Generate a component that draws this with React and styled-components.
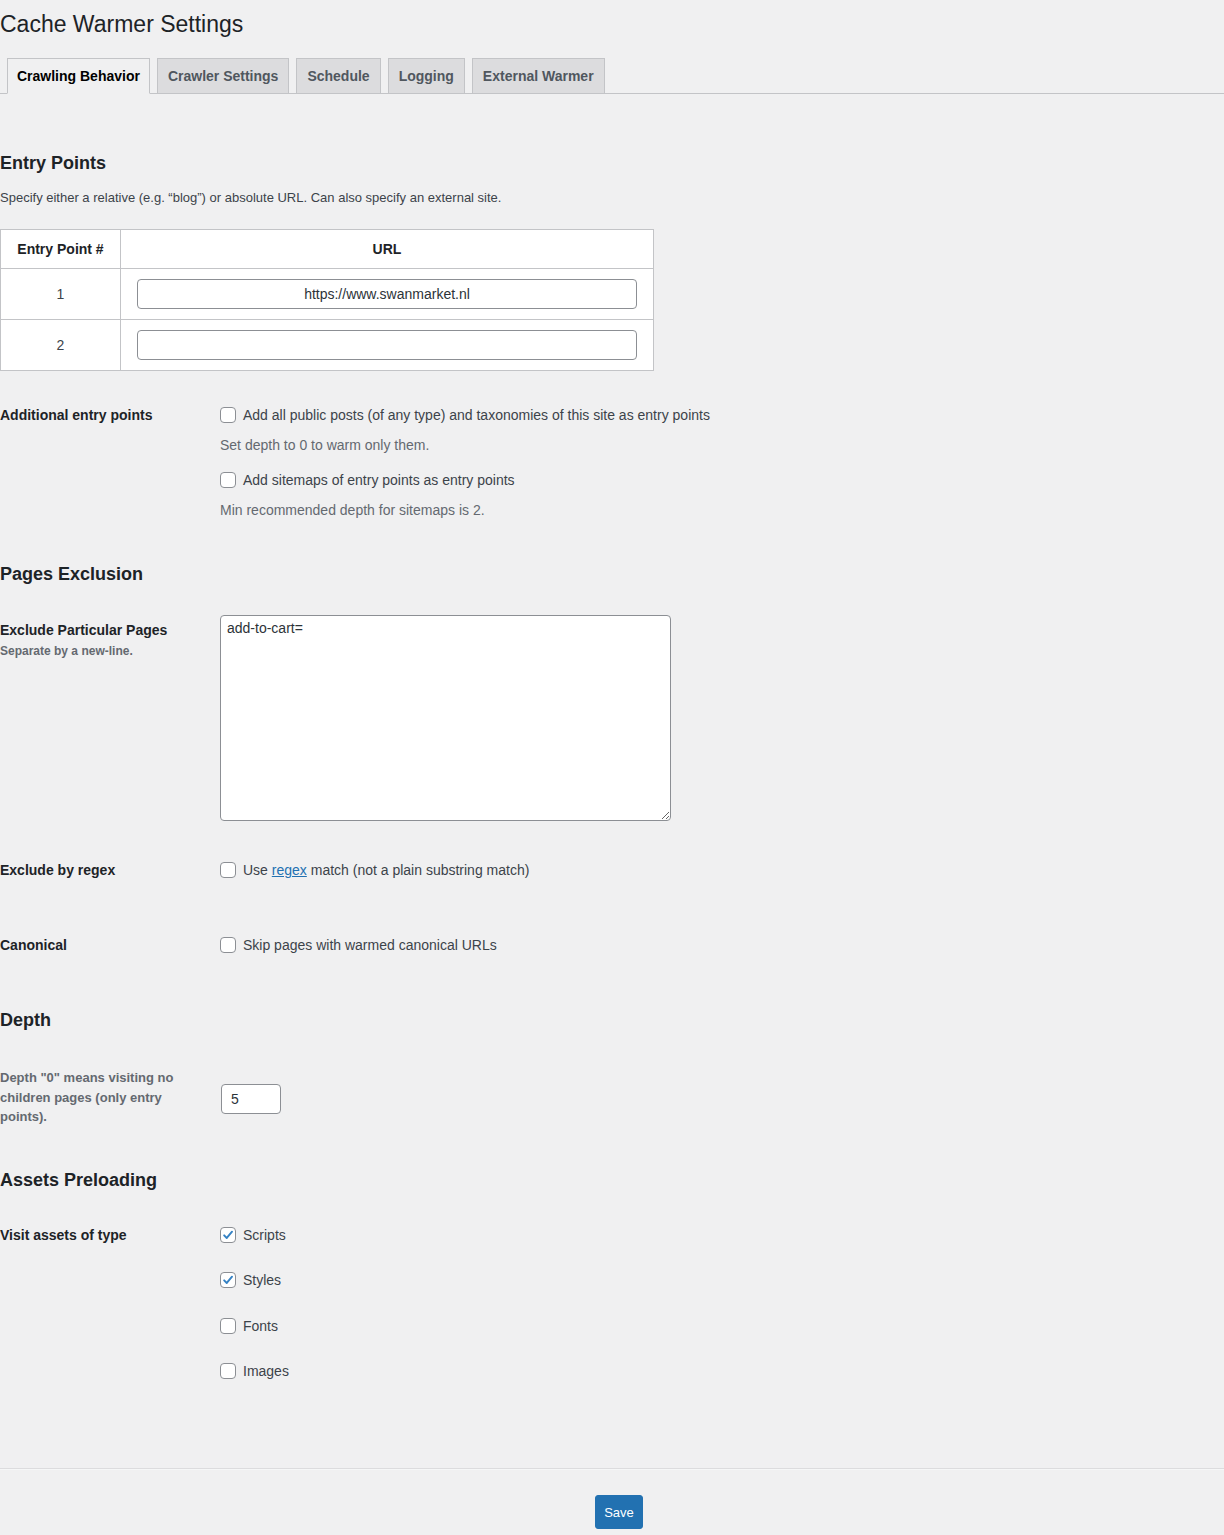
import React from "react";
import styled, { createGlobalStyle } from "styled-components";

const GlobalStyle = createGlobalStyle`
  html, body { margin: 0; padding: 0; background: #f0f0f1; }
  * { box-sizing: border-box; }
`;

const Page = styled.div`
  min-height: 1535px;
  background: #f0f0f1;
  font-family: "Liberation Sans", Arial, sans-serif;
  font-size: 14px;
  color: #3c434a;
  display: flex;
  flex-direction: column;
  padding-bottom: 6px;
`;

const Title = styled.h1`
  margin: 9px 0 19px;
  font-size: 23px;
  font-weight: 400;
  line-height: 30px;
  color: #1d2327;
`;

const TabBar = styled.nav`
  display: flex;
  align-items: flex-end;
  gap: 7px;
  height: 36px;
  padding-left: 7px;
  border-bottom: 1px solid #c3c4c7;
`;

const Tab = styled.a`
  height: 36px;
  margin-bottom: -1px;
  padding: 0 ${(p) => (p.$active ? 9 : 10)}px;
  display: flex;
  align-items: center;
  border: 1px solid #c3c4c7;
  border-bottom-color: ${(p) => (p.$active ? "#f0f0f1" : "#c3c4c7")};
  background: ${(p) => (p.$active ? "#f0f0f1" : "#dcdcde")};
  color: ${(p) => (p.$active ? "#000" : "#50575e")};
  font-size: 14px;
  font-weight: 700;
  text-decoration: none;
  white-space: nowrap;
`;

const SectionTitle = styled.h2`
  margin: ${(p) => p.$mt}px 0 0;
  font-size: 18px;
  font-weight: 700;
  line-height: 24px;
  color: #1d2327;
`;

const Intro = styled.p`
  margin: 13px 0 0;
  font-size: 13px;
  line-height: 20px;
`;

const EntryTable = styled.table`
  margin-top: 21px;
  width: 654px;
  border-collapse: collapse;
  background: #fff;
  border: 1px solid #c3c4c7;
`;

const HeadCell = styled.th`
  height: 39px;
  padding: 0 16px;
  border: 1px solid #c3c4c7;
  font-size: 14px;
  font-weight: 700;
  color: #1d2327;
  text-align: center;
  width: ${(p) => p.$w || "auto"};
`;

const Cell = styled.td`
  height: 51px;
  padding: 0 16px;
  border: 1px solid #c3c4c7;
  text-align: center;
  font-size: 14px;
  color: #3c434a;
`;

const UrlInput = styled.input`
  display: block;
  width: 100%;
  height: 30px;
  padding: 0 8px;
  border: 1px solid #8c8f94;
  border-radius: 4px;
  background: #fff;
  font-family: inherit;
  font-size: 14px;
  color: #2c3338;
  text-align: center;
`;

const FormRow = styled.div`
  display: grid;
  grid-template-columns: 220px 1fr;
  align-items: start;
  margin-top: ${(p) => p.$mt}px;
`;

const RowLabel = styled.div`
  padding-top: ${(p) => p.$pt || 0}px;
  font-size: 14px;
  font-weight: 700;
  line-height: 20px;
  color: #1d2327;
`;

const SubLabel = styled.div`
  margin-top: 3px;
  font-size: 12px;
  font-weight: 700;
  line-height: 16px;
  color: #646970;
`;

const MutedLabel = styled.div`
  width: 190px;
  font-size: 13px;
  font-weight: 700;
  line-height: 19.5px;
  color: #646970;
`;

const FieldStack = styled.div`
  display: flex;
  flex-direction: column;
  gap: ${(p) => p.$gap || 0}px;
`;

const CheckLine = styled.label`
  display: flex;
  align-items: center;
  gap: 7px;
  height: 20px;
  margin-top: ${(p) => p.$mt || 0}px;
  font-size: 14px;
  line-height: 20px;
  color: #3c434a;
  white-space: nowrap;
`;

const Box = styled.span`
  flex: none;
  width: 16px;
  height: 16px;
  border: 1px solid #8c8f94;
  border-radius: 4px;
  background: #fff;
  display: flex;
  align-items: center;
  justify-content: center;
`;

const Hint = styled.p`
  margin: ${(p) => p.$mt || 0}px 0 0;
  font-size: 14px;
  line-height: 20px;
  color: #646970;
`;

const Link = styled.a`
  color: #2271b1;
  text-decoration: underline;
`;

const Area = styled.textarea`
  display: block;
  width: 451px;
  height: 206px;
  padding: 2px 6px;
  border: 1px solid #8c8f94;
  border-radius: 4px;
  background: #fff;
  font-family: inherit;
  font-size: 14px;
  line-height: 20px;
  color: #2c3338;
`;

const NumberInput = styled.input`
  display: block;
  width: 60px;
  height: 30px;
  margin-top: 16px;
  margin-left: 1px;
  padding: 0 9px;
  border: 1px solid #8c8f94;
  border-radius: 4px;
  background: #fff;
  font-family: inherit;
  font-size: 14px;
  color: #2c3338;
`;

const Rule = styled.hr`
  margin: 87px 0 0;
  height: 0;
  border: 0;
  border-top: 1px solid #dcdcde;
  border-bottom: 1px solid #f6f7f7;
`;

const Footer = styled.div`
  margin-top: 25px;
  display: flex;
  justify-content: center;
  padding-left: 14px;
`;

const SaveButton = styled.button`
  height: 34px;
  padding: 0 8px;
  border: 1px solid #2271b1;
  border-radius: 3px;
  background: #2271b1;
  color: #fff;
  font-family: inherit;
  font-size: 13px;
  cursor: pointer;
`;

function Check({ checked, children, mt }) {
  return (
    <CheckLine $mt={mt}>
      <Box>
        {checked && (
          <svg width="14" height="14" viewBox="0 0 16 16" aria-hidden="true">
            <path d="M3.6 8.4 L6.6 11.4 L12.6 4.2" fill="none" stroke="#3582c4" strokeWidth="2.2" strokeLinecap="round" strokeLinejoin="round" />
          </svg>
        )}
      </Box>
      <span>{children}</span>
    </CheckLine>
  );
}

const tabs = ["Crawling Behavior", "Crawler Settings", "Schedule", "Logging", "External Warmer"];

export default function App() {
  return (
    <>
      <GlobalStyle />
      <Page>
        <Title>Cache Warmer Settings</Title>
        <TabBar>
          {tabs.map((t, i) => (
            <Tab key={t} $active={i === 0}>{t}</Tab>
          ))}
        </TabBar>

        <SectionTitle $mt={57}>Entry Points</SectionTitle>
        <Intro>Specify either a relative (e.g. “blog”) or absolute URL. Can also specify an external site.</Intro>
        <EntryTable>
          <thead>
            <tr>
              <HeadCell $w="120px">Entry Point #</HeadCell>
              <HeadCell>URL</HeadCell>
            </tr>
          </thead>
          <tbody>
            <tr>
              <Cell>1</Cell>
              <Cell><UrlInput defaultValue="https://www.swanmarket.nl" /></Cell>
            </tr>
            <tr>
              <Cell>2</Cell>
              <Cell><UrlInput defaultValue="" /></Cell>
            </tr>
          </tbody>
        </EntryTable>

        <FormRow $mt={34}>
          <RowLabel>Additional entry points</RowLabel>
          <FieldStack>
            <Check>Add all public posts (of any type) and taxonomies of this site as entry points</Check>
            <Hint $mt={10}>Set depth to 0 to warm only them.</Hint>
            <Check mt={15}>Add sitemaps of entry points as entry points</Check>
            <Hint $mt={10}>Min recommended depth for sitemaps is 2.</Hint>
          </FieldStack>
        </FormRow>

        <SectionTitle $mt={42}>Pages Exclusion</SectionTitle>
        <FormRow $mt={29}>
          <RowLabel $pt={5}>
            Exclude Particular Pages
            <SubLabel>Separate by a new-line.</SubLabel>
          </RowLabel>
          <Area defaultValue="add-to-cart=" />
        </FormRow>

        <FormRow $mt={39}>
          <RowLabel>Exclude by regex</RowLabel>
          <Check>
            Use <Link href="#">regex</Link> match (not a plain substring match)
          </Check>
        </FormRow>

        <FormRow $mt={55}>
          <RowLabel>Canonical</RowLabel>
          <Check>Skip pages with warmed canonical URLs</Check>
        </FormRow>

        <SectionTitle $mt={53}>Depth</SectionTitle>
        <FormRow $mt={36}>
          <MutedLabel>Depth "0" means visiting no children pages (only entry points).</MutedLabel>
          <NumberInput defaultValue="5" />
        </FormRow>

        <SectionTitle $mt={41}>Assets Preloading</SectionTitle>
        <FormRow $mt={33}>
          <RowLabel>Visit assets of type</RowLabel>
          <FieldStack $gap={25.67}>
            <Check checked>Scripts</Check>
            <Check checked>Styles</Check>
            <Check>Fonts</Check>
            <Check>Images</Check>
          </FieldStack>
        </FormRow>

        <Rule />
        <Footer>
          <SaveButton type="button">Save</SaveButton>
        </Footer>
      </Page>
    </>
  );
}
